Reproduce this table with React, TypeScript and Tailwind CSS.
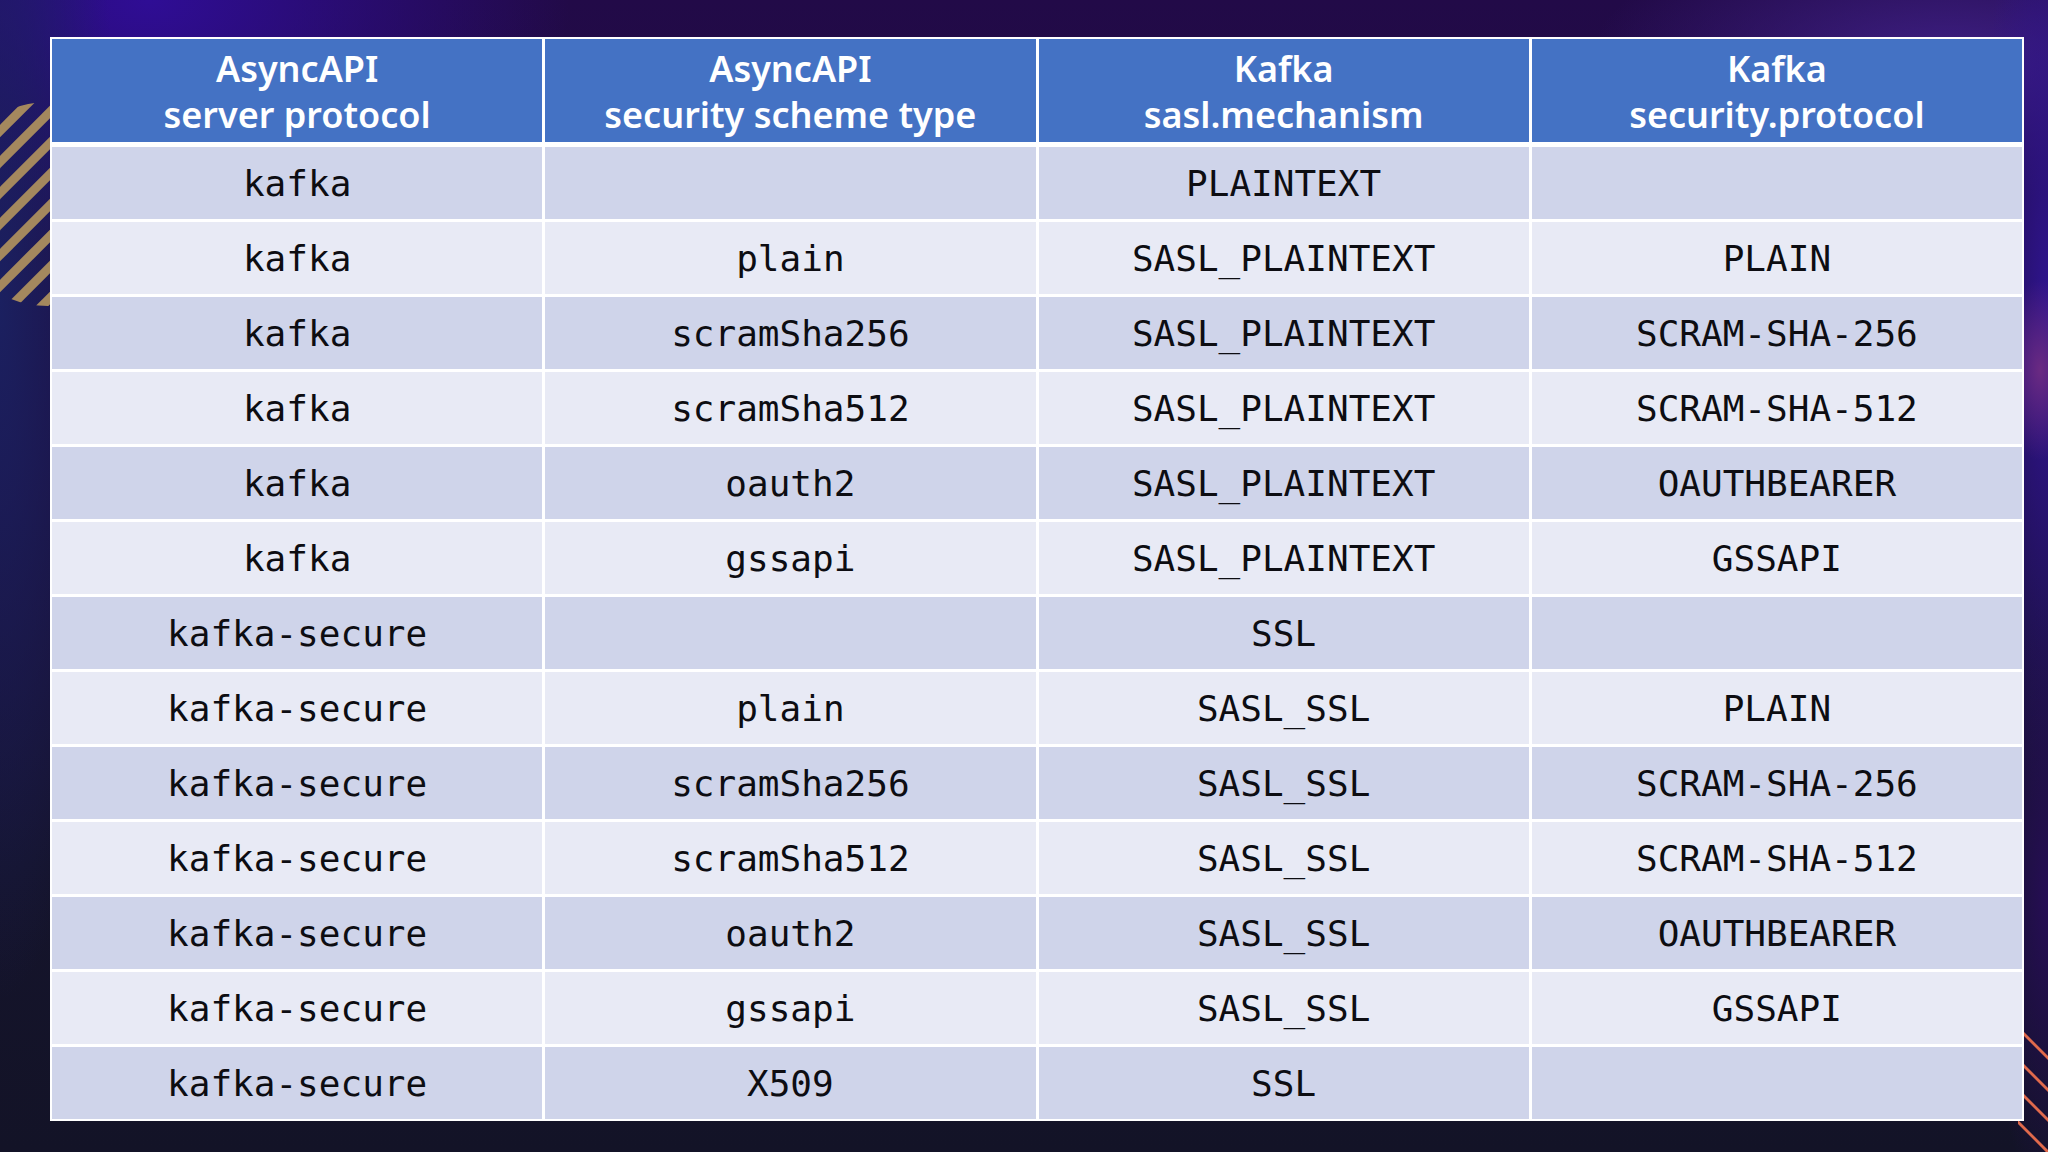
import React from "react";

const rows: [string, string, string, string][] = [
  ["kafka", "", "PLAINTEXT", ""],
  ["kafka", "plain", "SASL_PLAINTEXT", "PLAIN"],
  ["kafka", "scramSha256", "SASL_PLAINTEXT", "SCRAM-SHA-256"],
  ["kafka", "scramSha512", "SASL_PLAINTEXT", "SCRAM-SHA-512"],
  ["kafka", "oauth2", "SASL_PLAINTEXT", "OAUTHBEARER"],
  ["kafka", "gssapi", "SASL_PLAINTEXT", "GSSAPI"],
  ["kafka-secure", "", "SSL", ""],
  ["kafka-secure", "plain", "SASL_SSL", "PLAIN"],
  ["kafka-secure", "scramSha256", "SASL_SSL", "SCRAM-SHA-256"],
  ["kafka-secure", "scramSha512", "SASL_SSL", "SCRAM-SHA-512"],
  ["kafka-secure", "oauth2", "SASL_SSL", "OAUTHBEARER"],
  ["kafka-secure", "gssapi", "SASL_SSL", "GSSAPI"],
  ["kafka-secure", "X509", "SSL", ""],
];

const headers: [string, string][] = [
  ["AsyncAPI", "server protocol"],
  ["AsyncAPI", "security scheme type"],
  ["Kafka", "sasl.mechanism"],
  ["Kafka", "security.protocol"],
];

function GoldStripes() {
  return (
    <svg className="absolute left-0 top-[100px]" width="60" height="210" viewBox="0 0 60 210">
      <defs>
        <clipPath id="gc">
          <circle cx="48" cy="104" r="102" />
        </clipPath>
      </defs>
      <g clipPath="url(#gc)" stroke="#a4885e" strokeWidth="9">
        {Array.from({ length: 12 }).map((_, i) => (
          <line key={i} x1={-40} y1={40 + i * 31} x2={80} y2={-80 + i * 31} />
        ))}
      </g>
    </svg>
  );
}

function OrangeLines() {
  return (
    <svg className="absolute right-0 top-[1028px]" width="30" height="124" viewBox="0 0 30 124">
      <g stroke="#e06a4c" strokeWidth="3">
        <line x1="0" y1="0" x2="40" y2="40" />
        <line x1="0" y1="32" x2="40" y2="72" />
        <line x1="0" y1="62" x2="40" y2="102" />
        <line x1="-8" y1="86" x2="40" y2="134" />
      </g>
    </svg>
  );
}

export default function App() {
  return (
    <div className="relative w-[2048px] h-[1152px] overflow-hidden bg-[linear-gradient(180deg,#220a48_0%,#1c0f3e_40%,#15142c_75%,#131327_100%)]">
      <div className="absolute inset-0 bg-[radial-gradient(ellipse_420px_260px_at_150px_0px,#2f0d95_0%,rgba(45,13,140,0)_100%)]" />
      <div className="absolute inset-0 bg-[radial-gradient(ellipse_120px_700px_at_0px_300px,#1b2060_0%,rgba(27,32,96,0)_100%)]" />
      <div className="absolute inset-0 bg-[radial-gradient(ellipse_360px_140px_at_1950px_60px,#3e1f84_0%,rgba(62,31,132,0)_100%)]" />
      <div className="absolute inset-0 bg-[radial-gradient(ellipse_70px_500px_at_2048px_320px,#2f1490_0%,rgba(47,20,144,0)_100%)]" />
      <div className="absolute inset-0 bg-[radial-gradient(ellipse_40px_90px_at_2040px_370px,#6a2a82_0%,rgba(106,42,130,0)_100%)]" />
      <div className="absolute inset-0 bg-[radial-gradient(ellipse_60px_300px_at_2048px_900px,#260d55_0%,rgba(38,13,85,0)_100%)]" />
      <GoldStripes />
      <OrangeLines />

      <div className="relative pt-[37px] pl-[50px]">
        <div className="w-[1974px] bg-white p-[2px] flex flex-col gap-[5px]">
          <div className="grid grid-cols-4 gap-[3px] h-[103px]">
            {headers.map((h, i) => (
              <div
                key={i}
                className="bg-[#4472c4] flex flex-col items-center justify-center text-white text-[36px] leading-[46px] font-semibold [font-family:'Noto_Sans','Open_Sans',sans-serif] pt-[2px]"
              >
                <span>{h[0]}</span>
                <span>{h[1]}</span>
              </div>
            ))}
          </div>
          <div className="flex flex-col gap-[3px]">
            {rows.map((r, ri) => (
              <div key={ri} className="grid grid-cols-4 gap-[3px] h-[72px]">
                {r.map((c, ci) => (
                  <div
                    key={ci}
                    className={`flex items-center justify-center pt-[2px] text-[36px] text-[#0d0d12] [font-family:'DejaVu_Sans_Mono',monospace] ${
                      ri % 2 === 0 ? "bg-[#cfd4ea]" : "bg-[#e8eaf5]"
                    }`}
                  >
                    {c}
                  </div>
                ))}
              </div>
            ))}
          </div>
        </div>
      </div>
    </div>
  );
}
